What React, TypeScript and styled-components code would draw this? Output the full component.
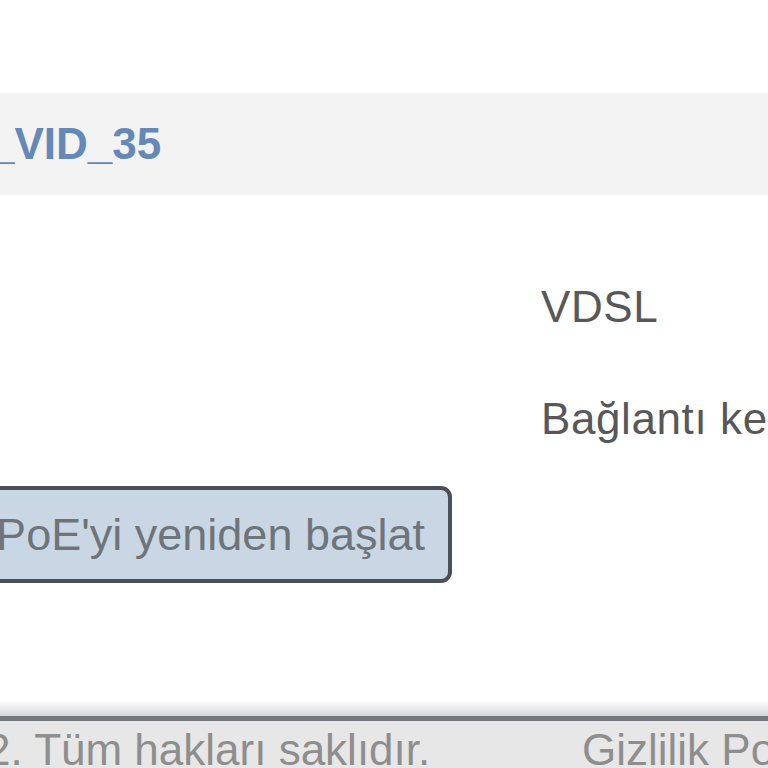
import React from 'react';
import styled, { createGlobalStyle } from 'styled-components';

const GlobalStyle = createGlobalStyle`
  html, body {
    margin: 0;
    padding: 0;
    background: #ffffff;
    overflow: hidden;
  }
  body {
    font-family: 'Liberation Sans', Arial, sans-serif;
  }
`;

const Page = styled.div`
  width: 768px;
  height: 768px;
  display: flex;
  flex-direction: column;
  overflow: hidden;
  background: #ffffff;
`;

const TitleBar = styled.div`
  margin-top: 93px;
  height: 102px;
  display: flex;
  align-items: center;
  background: #f3f3f3;
`;

const Title = styled.h2`
  margin: 0 0 0 -10px;
  font-size: 44px;
  font-weight: 700;
  line-height: 56px;
  color: #6489b8;
  white-space: nowrap;
`;

const InfoGrid = styled.div`
  display: grid;
  grid-template-columns: 541px 1fr;
  grid-auto-rows: 56px;
  row-gap: 56px;
  padding-top: 84px;
`;

const Value = styled.div`
  grid-column: 2;
  font-size: 44px;
  line-height: 56px;
  letter-spacing: 0.6px;
  color: #585858;
  white-space: nowrap;
`;

const ActionRow = styled.div`
  display: flex;
  justify-content: flex-end;
  width: 452px;
  margin-top: 39px;
`;

const ActionButton = styled.button`
  flex-shrink: 0;
  box-sizing: border-box;
  height: 97px;
  padding: 0 23px;
  border: 4px solid #4c5056;
  border-radius: 11px;
  background: #c9d7e5;
  font-family: 'Liberation Sans', Arial, sans-serif;
  font-size: 45px;
  line-height: 56px;
  color: #6f7479;
  white-space: nowrap;
`;

const Footer = styled.footer`
  margin-top: auto;
  display: flex;
  flex-direction: column;
`;

const FooterShade = styled.div`
  height: 16px;
  background: linear-gradient(#ffffff, #d3d7db);
  border-bottom: 5px solid #74787d;
`;

const FooterBar = styled.div`
  display: grid;
  grid-template-columns: 582px 1fr;
  padding-top: 4px;
  height: 43px;
  background: #e7e7e7;
  overflow: hidden;
`;

const FooterText = styled.span<{ $shift?: number }>`
  margin-left: ${(p) => p.$shift ?? 0}px;
  font-size: 44px;
  line-height: 50px;
  color: #8e8e8e;
  white-space: nowrap;
`;

const App: React.FC = () => {
  return (
    <Page>
      <GlobalStyle />
      <TitleBar>
        <Title>_VID_35</Title>
      </TitleBar>

      <InfoGrid>
        <Value>VDSL</Value>
        <Value>Bağlantı kesildi</Value>
      </InfoGrid>

      <ActionRow>
        <ActionButton type="button">PPPoE'yi yeniden başlat</ActionButton>
      </ActionRow>

      <Footer>
        <FooterShade />
        <FooterBar>
          <FooterText $shift={-14}>2. Tüm hakları saklıdır.</FooterText>
          <FooterText>Gizlilik Politikası</FooterText>
        </FooterBar>
      </Footer>
    </Page>
  );
};

export default App;
